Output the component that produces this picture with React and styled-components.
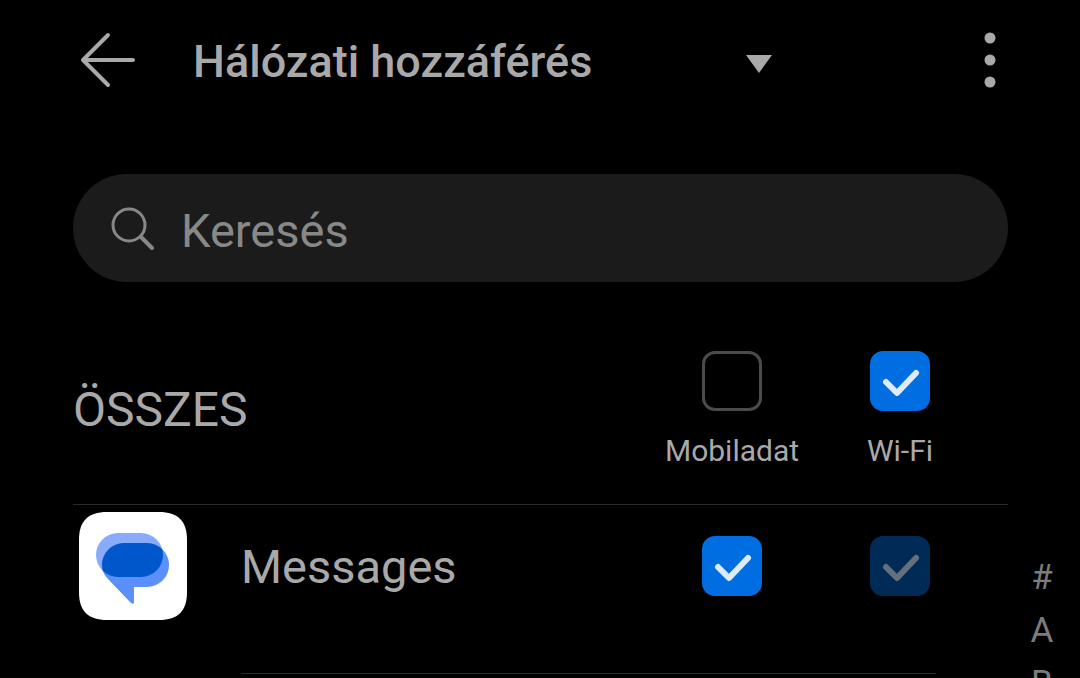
import React, { useState } from 'react';
import styled, { createGlobalStyle } from 'styled-components';

const indexLetters = ['#', 'A', 'B'];

function CheckBox({ id, ...props }) {
  return (
    <CheckWrap>
      <CheckInput type="checkbox" id={id} {...props} />
      <CheckMark viewBox="0 0 60 60" aria-hidden="true">
        <path d="M16 31 L27 42 L46 22" />
      </CheckMark>
    </CheckWrap>
  );
}

function MessagesIcon() {
  const front =
    'M45 31 H68 A22 22 0 0 1 68 75 H55 V90 Q55 93 52 91 L29 67 Q23 61 23 53 A22 22 0 0 1 45 31 Z';

  return (
    <AppIcon viewBox="0 0 108 108" aria-hidden="true">
      <defs>
        <clipPath id="front-bubble">
          <path d={front} />
        </clipPath>
      </defs>
      <path
        fill="#fff"
        d="M28 0 H80 C99 0 108 9 108 28 V80 C108 99 99 108 80 108 H28 C9 108 0 99 0 80 V28 C0 9 9 0 28 0 Z"
      />
      <rect x="17" y="21" width="67" height="44" rx="22" fill="#8aabfb" />
      <path d={front} fill="#5b8ffb" />
      <rect
        x="17"
        y="21"
        width="67"
        height="44"
        rx="22"
        fill="#0057cc"
        clipPath="url(#front-bubble)"
      />
    </AppIcon>
  );
}

function App() {
  const [allMobile, setAllMobile] = useState(false);
  const [allWifi, setAllWifi] = useState(true);
  const [mobile, setMobile] = useState(true);

  return (
    <>
      <GlobalStyle />
      <Page>
        <Header>
          <IconButton type="button" aria-label="Vissza">
            <BackIcon viewBox="0 0 56 56" aria-hidden="true">
              <path d="M28 3 L3 28 L28 53 M3 28 H53" />
            </BackIcon>
          </IconButton>
          <TitlePicker>
            <TitleSelect aria-label="Nézet">
              <option>Hálózati hozzáférés</option>
            </TitleSelect>
            <Caret viewBox="0 0 26 18" aria-hidden="true">
              <path d="M0 0 H26 L13 18 Z" />
            </Caret>
          </TitlePicker>
          <IconButton type="button" aria-label="Továbbiak">
            <MoreIcon viewBox="0 0 12 56" aria-hidden="true">
              <circle cx="6" cy="6" r="5.5" />
              <circle cx="6" cy="28" r="5.5" />
              <circle cx="6" cy="50" r="5.5" />
            </MoreIcon>
          </IconButton>
        </Header>

        <SearchBar>
          <SearchIcon viewBox="0 0 44 44" aria-hidden="true">
            <circle cx="18" cy="18" r="16" />
            <path d="M30 30 L41 41" strokeWidth="4" />
          </SearchIcon>
          <SearchInput type="search" placeholder="Keresés" aria-label="Keresés" />
        </SearchBar>

        <Body>
          <main>
            <AllRow>
              <AllTitle>ÖSSZES</AllTitle>
              <Column>
                <CheckBox
                  id="all-mobile"
                  checked={allMobile}
                  onChange={(e) => setAllMobile(e.target.checked)}
                />
                <ColumnLabel htmlFor="all-mobile">Mobiladat</ColumnLabel>
              </Column>
              <Column>
                <CheckBox
                  id="all-wifi"
                  checked={allWifi}
                  onChange={(e) => setAllWifi(e.target.checked)}
                />
                <ColumnLabel htmlFor="all-wifi">Wi-Fi</ColumnLabel>
              </Column>
            </AllRow>
            <AppRow>
              <MessagesIcon />
              <AppName>Messages</AppName>
              <Column>
                <CheckBox
                  id="messages-mobile"
                  aria-label="Messages, Mobiladat"
                  checked={mobile}
                  onChange={(e) => setMobile(e.target.checked)}
                />
              </Column>
              <Column>
                <CheckBox
                  id="messages-wifi"
                  aria-label="Messages, Wi-Fi"
                  checked
                  disabled
                  readOnly
                />
              </Column>
            </AppRow>
            <RowDivider />
          </main>
          <Index aria-label="Betűk">
            {indexLetters.map((letter) => (
              <IndexLink key={letter} href={`#${letter}`}>
                {letter}
              </IndexLink>
            ))}
          </Index>
        </Body>
      </Page>
    </>
  );
}

export default App;

const GlobalStyle = createGlobalStyle`
  * {
    box-sizing: border-box;
  }

  body {
    margin: 0;
    background-color: #000;
    color: #a9a9a9;
    font-family: Roboto, 'Liberation Sans', sans-serif;
  }

  button, input, select {
    font-family: inherit;
    color: inherit;
  }
`;

const Page = styled.div`
  height: 100vh;
  overflow: hidden;
`;

const Header = styled.header`
  display: flex;
  align-items: center;
  height: 120px;
  padding: 0 72px 0 80px;
`;

const IconButton = styled.button`
  display: flex;
  flex: none;
  padding: 0;
  border: 0;
  background: none;
  cursor: pointer;
`;

const BackIcon = styled.svg`
  width: 56px;
  height: 56px;
  fill: none;
  stroke: #a9a9a9;
  stroke-width: 4;
  stroke-linecap: round;
  stroke-linejoin: round;
`;

const MoreIcon = styled.svg`
  width: 12px;
  height: 56px;
  margin-right: 12px;
  fill: #a9a9a9;
`;

const TitlePicker = styled.div`
  display: grid;
  align-items: center;
  width: 579px;
  margin: 0 auto 0 57px;
`;

const TitleSelect = styled.select`
  grid-area: 1 / 1;
  width: 100%;
  padding: 4px 0 0;
  border: 0;
  appearance: none;
  background: none;
  font-size: 45px;
  font-weight: 500;
  line-height: 60px;
`;

const Caret = styled.svg`
  grid-area: 1 / 1;
  justify-self: end;
  width: 26px;
  height: 18px;
  margin-top: 8px;
  fill: #a9a9a9;
  pointer-events: none;
`;

const SearchBar = styled.div`
  display: flex;
  align-items: center;
  gap: 26px;
  height: 108px;
  margin: 54px 72px 0 73px;
  padding: 2px 38px 0;
  border-radius: 54px;
  background-color: #1b1b1b;
  color: #888;
`;

const SearchIcon = styled.svg`
  flex: none;
  width: 44px;
  height: 44px;
  fill: none;
  stroke: currentColor;
  stroke-width: 3;
  stroke-linecap: round;
`;

const SearchInput = styled.input`
  flex: 1;
  min-width: 0;
  padding: 2px 0 0;
  border: 0;
  outline: 0;
  background: none;
  font-size: 47px;

  &::placeholder {
    color: #888;
    opacity: 1;
  }
`;

const Body = styled.div`
  display: grid;
  grid-template-columns: 1fr 68px;
  padding: 0 4px 0 73px;
`;

const AllRow = styled.div`
  display: flex;
  align-items: center;
  padding: 69px 24px 34px 0;
  border-bottom: 1px solid #2b2b2b;
`;

const AllTitle = styled.h2`
  flex: 1;
  margin: 0;
  padding-bottom: 2px;
  font-size: 48px;
  font-weight: 400;
`;

const Column = styled.div`
  display: flex;
  flex: none;
  flex-direction: column;
  align-items: center;
  gap: 21px;
  width: 168px;
`;

const ColumnLabel = styled.label`
  font-size: 30px;
  line-height: 38px;
`;

const CheckWrap = styled.span`
  display: grid;
  width: 60px;
  height: 60px;
`;

const CheckMark = styled.svg`
  grid-area: 1 / 1;
  visibility: hidden;
  fill: none;
  stroke: #dfeafa;
  stroke-width: 6;
  stroke-linecap: round;
  stroke-linejoin: round;
  pointer-events: none;
`;

const CheckInput = styled.input`
  grid-area: 1 / 1;
  width: 60px;
  height: 60px;
  margin: 0;
  border: 3px solid #4b4b4b;
  border-radius: 13px;
  appearance: none;

  &:checked {
    border: 0;
    background-color: #006ee0;
  }

  &:checked + ${CheckMark} {
    visibility: visible;
  }

  &:disabled {
    background-color: #002b57;
  }

  &:disabled + ${CheckMark} {
    stroke: #66707c;
  }
`;

const AppRow = styled.div`
  display: flex;
  align-items: center;
  padding: 7px 24px 53px 6px;
`;

const AppIcon = styled.svg`
  flex: none;
  width: 108px;
  height: 108px;
`;

const AppName = styled.span`
  flex: 1;
  margin-left: 54px;
  font-size: 47px;
`;

const RowDivider = styled.hr`
  height: 1px;
  margin: 0 72px 0 168px;
  border: 0;
  background-color: #2b2b2b;
`;

const Index = styled.nav`
  display: flex;
  flex-direction: column;
  align-items: center;
  padding-top: 269px;
`;

const IndexLink = styled.a`
  color: #7c7c7c;
  font-size: 35px;
  line-height: 53px;
  text-decoration: none;
`;
